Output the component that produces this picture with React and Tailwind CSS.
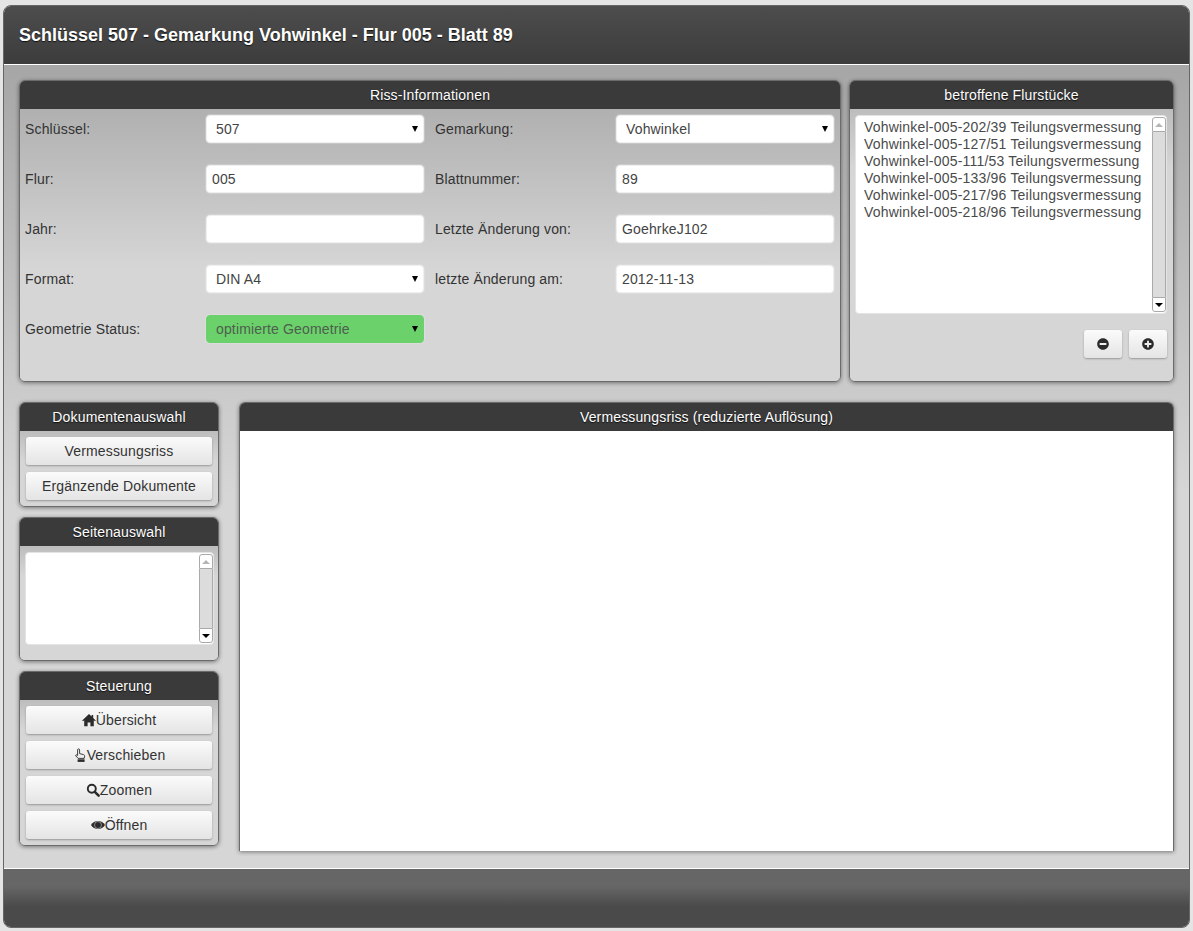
import React from 'react';
import { FaMinusCircle, FaPlusCircle } from 'react-icons/fa';

const flurstuecke = [
    'Vohwinkel-005-202/39 Teilungsvermessung',
    'Vohwinkel-005-127/51 Teilungsvermessung',
    'Vohwinkel-005-111/53 Teilungsvermessung',
    'Vohwinkel-005-133/96 Teilungsvermessung',
    'Vohwinkel-005-217/96 Teilungsvermessung',
    'Vohwinkel-005-218/96 Teilungsvermessung',
];

// glyphicon-like icons, the icon packages have no close match
const HomeIcon = () => (
    <svg width="14" height="14" viewBox="0 0 14 14" fill="#2b2b2b">
        <path d="M7 1 0.2 7.4 1 8.2 2.2 7.2V13.2H5.6V9.6H8.4V13.2H11.8V7.2L13 8.2 13.8 7.4 11.2 5V2H9.6V3.5Z" />
    </svg>
);

const HandIcon = () => (
    <svg width="14" height="14" viewBox="0 0 14 14">
        <path d="M4.6 7.5V1.9a1 1 0 0 1 2 0V5.6l3.6.9c1 .3 1.5.8 1.4 1.7L11.2 10.4H5.2L2.8 7.9C2.2 7 3.4 6.2 4.6 7.5Z" fill="none" stroke="#2b2b2b" strokeWidth="0.9" />
        <rect x="4.6" y="11.3" width="7" height="2.6" fill="#2b2b2b" />
    </svg>
);

const SearchIcon = () => (
    <svg width="14" height="14" viewBox="0 0 14 14">
        <circle cx="5.8" cy="5.8" r="4" fill="none" stroke="#2b2b2b" strokeWidth="1.9" />
        <path d="M8.8 8.8 12.6 12.6" stroke="#2b2b2b" strokeWidth="2.6" strokeLinecap="round" />
    </svg>
);

const EyeIcon = () => (
    <svg width="14" height="14" viewBox="0 0 14 14">
        <path d="M0 7C3 1.6 11 1.6 14 7 11 12.4 3 12.4 0 7Z" fill="#2b2b2b" />
        <circle cx="7" cy="7" r="3.5" fill="none" stroke="#cfcfcf" strokeWidth="0.6" />
    </svg>
);

const Panel = ({ title, className = '', bodyClass = '', children }) => (
    <section className={`flex flex-col rounded-[6px] border border-[#6b6b6b] shadow-[0_1px_4px_rgba(0,0,0,0.45)] overflow-hidden ${className}`}>
        <h2 className="h-[28px] shrink-0 bg-[#3a3a3a] text-white text-[14px] tracking-[0.15px] leading-[28px] text-center font-normal [text-shadow:0_1px_1px_#111]">{title}</h2>
        <div className={`flex-1 ${bodyClass}`}>{children}</div>
    </section>
);

const Select = ({ value, green }) => (
    <div className="relative w-[218px] h-[28px]">
        <select
            defaultValue={value}
            className={`w-full h-full appearance-none rounded-[4px] pl-[9px] text-[14px] tracking-[0.15px] outline-none shadow-[0_0_0_1px_rgba(235,235,235,0.3)] ${green ? 'bg-[#6bd16b] border border-[#6bd16b] text-[#4d5f4d]' : 'bg-white border border-[#efefef] text-[#444]'}`}
        >
            <option>{value}</option>
        </select>
        <span className="absolute right-[6px] top-[11px] w-0 h-0 border-x-[3px] border-x-transparent border-t-[6px] border-t-black" />
    </div>
);

const Input = ({ value }) => (
    <input
        type="text"
        defaultValue={value}
        className="w-[218px] h-[28px] rounded-[4px] bg-white border border-[#efefef] px-[5px] text-[14px] tracking-[0.15px] text-[#444] outline-none shadow-[0_0_0_1px_rgba(235,235,235,0.3)]"
    />
);

const Field = ({ label, children }) => (
    <div className="flex items-center h-[28px]">
        <label className="w-[181px] shrink-0 text-[14px] tracking-[0.15px] text-[#333]">{label}</label>
        {children}
    </div>
);

const Btn = ({ icon, children, className = '' }) => (
    <button
        type="button"
        className={`flex items-center justify-center h-[28px] rounded-[3px] bg-[linear-gradient(#fbfbfb,#e4e4e4)] text-[14px] tracking-[0.15px] text-[#333] shadow-[0_1px_2px_rgba(0,0,0,0.3)] ${className}`}
    >
        {icon}
        {children}
    </button>
);

const ScrollBar = () => (
    <div className="flex flex-col w-[14px] shrink-0 my-[1px]">
        <div className="h-[15px] rounded-t-[3px] bg-white border border-[#aaa] flex items-center justify-center">
            <span className="w-0 h-0 border-x-[4px] border-x-transparent border-b-[4px] border-b-[#b5b5b5]" />
        </div>
        <div className="flex-1 bg-[#dcdcdc] border-x border-[#aaa]" />
        <div className="h-[15px] rounded-b-[3px] bg-white border border-[#aaa] flex items-center justify-center">
            <span className="w-0 h-0 border-x-[4px] border-x-transparent border-t-[4px] border-t-black" />
        </div>
    </div>
);

export default function App() {
    return (
        <div className="min-h-[931px] bg-[#e4e4e4] pt-[5px] px-[3px] pb-[3px] font-['Liberation_Sans',Arial,sans-serif]">
            <div className="flex flex-col h-[923px] rounded-[8px] border border-[#666] overflow-hidden">
                <header className="h-[59px] shrink-0 flex items-center pl-[15px] bg-[linear-gradient(#4d4d4d,#3c3c3c)] border-b border-white">
                    <h1 className="text-[18px] font-bold text-white [text-shadow:0_1px_1px_#111]">Schlüssel 507 - Gemarkung Vohwinkel - Flur 005 - Blatt 89</h1>
                </header>

                <main className="flex-1 flex flex-col gap-[20px] px-[15px] pt-[15px] bg-[linear-gradient(#a6a6a6,#d6d6d6_430px)]">
                    <div className="flex gap-[8px]">
                        <Panel title="Riss-Informationen" className="w-[822px] h-[302px]" bodyClass="bg-[linear-gradient(#b0b0b0,#d6d6d6_160px)]">
                            <div className="flex gap-[11px] pt-[6px] pl-[5px]">
                                <div className="flex flex-col gap-[22px]">
                                    <Field label="Schlüssel:"><Select value="507" /></Field>
                                    <Field label="Flur:"><Input value="005" /></Field>
                                    <Field label="Jahr:"><Input value="" /></Field>
                                    <Field label="Format:"><Select value="DIN A4" /></Field>
                                    <Field label="Geometrie Status:"><Select value="optimierte Geometrie" green /></Field>
                                </div>
                                <div className="flex flex-col gap-[22px]">
                                    <Field label="Gemarkung:"><Select value="Vohwinkel" /></Field>
                                    <Field label="Blattnummer:"><Input value="89" /></Field>
                                    <Field label="Letzte Änderung von:"><Input value="GoehrkeJ102" /></Field>
                                    <Field label="letzte Änderung am:"><Input value="2012-11-13" /></Field>
                                </div>
                            </div>
                        </Panel>

                        <Panel title="betroffene Flurstücke" className="w-[325px] h-[302px]" bodyClass="bg-[linear-gradient(#bdbdbd,#d6d6d6_60px)] pt-[6px] pl-[5px] pr-[6px]">
                            <div className="flex h-[199px] rounded-[4px] bg-white border border-[#e4e4e4]">
                                <ul className="flex-1 pl-[8px] pt-[3px] text-[14px] tracking-[0.2px] leading-[17px] text-[#4a4a4a]">
                                    {flurstuecke.map(f => <li key={f}>{f}</li>)}
                                </ul>
                                <ScrollBar />
                            </div>
                            <div className="flex justify-end gap-[7px] mt-[16px]">
                                <Btn icon={<FaMinusCircle size={12} className="text-[#2b2b2b]" />} className="w-[38px]" />
                                <Btn icon={<FaPlusCircle size={12} className="text-[#2b2b2b]" />} className="w-[38px]" />
                            </div>
                        </Panel>
                    </div>

                    <div className="flex gap-[20px]">
                        <div className="flex flex-col gap-[10px] w-[200px]">
                            <Panel title="Dokumentenauswahl" className="h-[105px]" bodyClass="bg-[linear-gradient(#bdbdbd,#d6d6d6_30px)] flex flex-col gap-[7px] p-[6px]">
                                <Btn>Vermessungsriss</Btn>
                                <Btn>Ergänzende Dokumente</Btn>
                            </Panel>
                            <Panel title="Seitenauswahl" className="h-[144px]" bodyClass="bg-[linear-gradient(#bdbdbd,#d6d6d6_30px)] pt-[6px] pl-[5px] pr-[4px]">
                                <div className="flex h-[93px] rounded-[4px] bg-white border border-[#e4e4e4]">
                                    <div className="flex-1" />
                                    <ScrollBar />
                                </div>
                            </Panel>
                            <Panel title="Steuerung" className="h-[175px]" bodyClass="bg-[linear-gradient(#bdbdbd,#d6d6d6_30px)] flex flex-col gap-[7px] p-[6px]">
                                <Btn icon={<HomeIcon />}>Übersicht</Btn>
                                <Btn icon={<HandIcon />}>Verschieben</Btn>
                                <Btn icon={<SearchIcon />}>Zoomen</Btn>
                                <Btn icon={<EyeIcon />}>Öffnen</Btn>
                            </Panel>
                        </div>

                        <Panel title="Vermessungsriss (reduzierte Auflösung)" className="w-[935px] h-[449px] rounded-b-none border-b-0" bodyClass="bg-white" />
                    </div>
                </main>

                <footer className="h-[59px] shrink-0 border-t border-white bg-[linear-gradient(#666666,#666666_30%,#4a4a4a_65%,#4a4a4a)]" />
            </div>
        </div>
    );
}
